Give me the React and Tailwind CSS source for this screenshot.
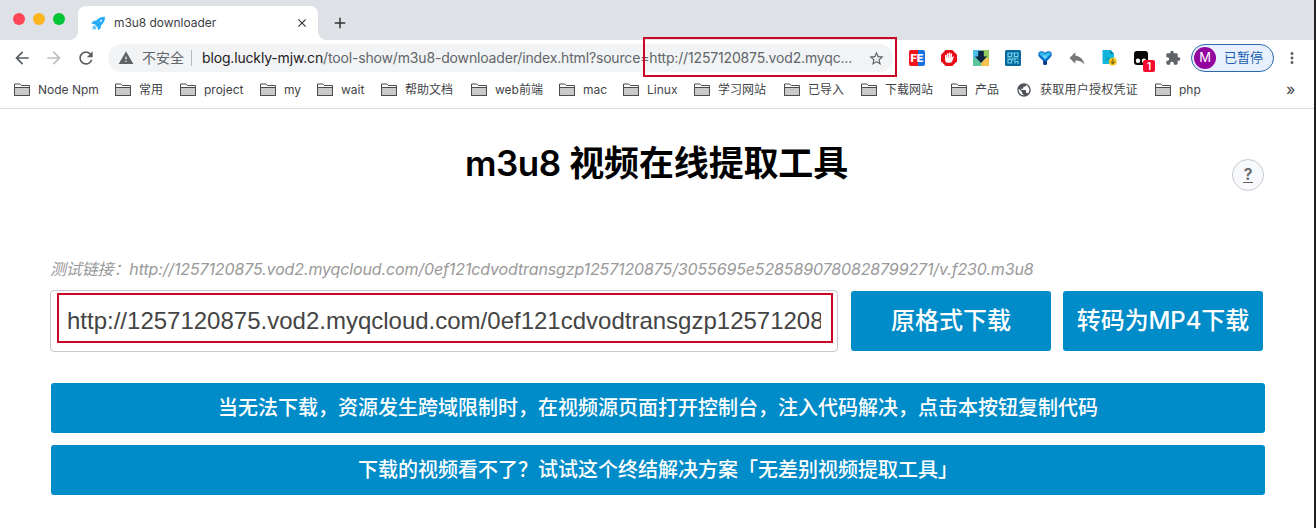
import React from "react";
import { MdArrowBack, MdArrowForward, MdRefresh, MdWarning, MdStarBorder, MdExtension, MdMoreVert, MdReply, MdClose, MdAdd, MdPublic } from "react-icons/md";

const bookmarks = [
  { label: "Node Npm", box: "w-[101px]", text: "" },
  { label: "常用", box: "w-[65px]", text: "" },
  { label: "project", box: "w-[80px]", text: "" },
  { label: "my", box: "w-[57px]", text: "" },
  { label: "wait", box: "w-[64px]", text: "" },
  { label: "帮助文档", box: "w-[90px]", text: "" },
  { label: "web前端", box: "w-[88px]", text: "" },
  { label: "mac", box: "w-[64px]", text: "" },
  { label: "Linux", box: "w-[71px]", text: "" },
  { label: "学习网站", box: "w-[90px]", text: "" },
  { label: "已导入", box: "w-[77px]", text: "" },
  { label: "下载网站", box: "w-[90px]", text: "" },
  { label: "产品", box: "w-[66px]", text: "" },
  { label: "获取用户授权凭证", box: "w-[138px]", text: "tracking-[0.25px] ml-[8px]", globe: true },
  { label: "php", box: "w-[60px]", text: "" },
];

function Folder() {
  return (
    <svg width="17" height="14" viewBox="0 0 17 14" className="shrink-0">
      <path d="M.5 12.500V1h5.300l1.700 1.500h8v10z" fill="#fff" stroke="#4a4a4a" />
      <path d="M.5 4.500h15v8H.5z" fill="#c9c9c9" stroke="#4a4a4a" />
    </svg>
  );
}

function Rocket() {
  return (
    <svg width="15" height="15" viewBox="0 0 15 15">
      <path d="M14 .8C10 .7 7.200 2 5.300 4.600L2.200 5 .4 7.700l2.900.2 3.400 3.500.3 2.800 2.700-1.900.3-3.100C12.700 7.400 14 4.800 14 .8z" fill="#27acf7" />
      <circle cx="10" cy="4.800" r="1.100" fill="#d5effd" />
      <path d="M3 9.300 1 11.200l1 .2-.7 2.300 2.400-.7.300.9 1.700-2.100z" fill="#5cc2fa" />
    </svg>
  );
}

function Extensions() {
  return (
    <div className="flex items-center gap-4">
      <div className="flex h-4 w-4 items-center justify-center overflow-hidden rounded-[2px] bg-[linear-gradient(90deg,#f4141c_58%,#1673e0_58%)] text-[11px] font-extrabold leading-none text-white">FE</div>
      <svg width="16" height="16" viewBox="0 0 16 16">
        <path d="M4.700 0h6.600L16 4.700v6.600L11.300 16H4.700L0 11.300V4.700z" fill="#e90b16" />
        <path d="M4.800 5.500v4M6.600 4v5M8.500 3.200v5M10.300 4v5" stroke="#fff" strokeWidth="1.500" strokeLinecap="round" />
        <path d="M4.100 7.500h6.900l1.100-1.100q.9-.4.700.5l-1.700 4.500Q10.500 12.800 8.500 12.800H7q-2.900-.1-2.900-3.100z" fill="#fff" />
      </svg>
      <svg width="16" height="16" viewBox="0 0 16 16">
        <path d="M0 0h8v8H0z" fill="#52bce8" /><path d="M8 0h8v8H8z" fill="#92ca62" />
        <path d="M0 8h8v8H0z" fill="#5cc39b" /><path d="M8 8h8v8H8z" fill="#f5c350" />
        <path d="M5.200 1h5.600v5.500H14L8 13 2 6.500h3.200z" fill="#092444" />
      </svg>
      <svg width="16" height="16" viewBox="0 0 16 16">
        <rect width="16" height="16" rx="1.500" fill="#07679c" />
        <g fill="none" stroke="#6fd0ec" strokeWidth="1.200"><path d="M3 3h3.500v3.500H3zM9.500 3H13v3.500H9.500zM3 9.500h3.500V13H3z" /><path d="M8 2.500v2M2.500 8h4M8 7v3h2V8h3M9 13h1v-1.500h3V14M12.500 9.500h1" /></g>
      </svg>
      <svg width="16" height="16" viewBox="0 0 16 16">
        <path d="M1.200 4.200Q1.500 1.300 4.200 1.300q1.800 0 3.800 1.400 2-1.400 3.800-1.400 2.700 0 3 2.900 0 1.500-1 2.700L10 11v3.200Q8 15.800 6.300 14.200V11L2.200 6.900Q1.200 5.700 1.200 4.200z" fill="#0869c4" />
        <path d="M2 3.900Q2.600 2 4.400 2.200q1.700.2 3.600 1.900 1.900-1.700 3.600-1.900 1.800-.2 2.400 1.700L8.200 9.800z" fill="#35b8ee" />
        <path d="M5.300 5 8 5.800 10.700 5 8.100 8.900z" fill="#72d9fa" />
        <path d="M6.300 11h3.700v3.200Q8 15.800 6.300 14.200z" fill="#063b82" />
      </svg>
      <MdReply className="-m-0.5 h-5 w-5 text-[#777]" />
      <svg width="16" height="16" viewBox="0 0 16 16">
        <path d="M1.500 0h7.800L13 3.700V14H2.500q-1 0-1-1z" fill="#12b5dc" />
        <path d="M9.300 0 13 3.700H9.300z" fill="#087d9f" /><path d="m5 6.500 4 4M5 10.500l3-3" stroke="#078dac" />
        <circle cx="11.800" cy="11.600" r="3.900" fill="#f2c51f" /><path d="M11.800 9v4.500m-2-1.800 2 2 2-2" fill="none" stroke="#806414" strokeWidth="1.100" />
      </svg>
      <div className="relative h-4 w-4">
        <svg width="16" height="16" viewBox="0 0 16 16">
          <rect x="1" y="1" width="14" height="14" rx="3" fill="#080808" /><circle cx="5" cy="10.800" r="2.200" fill="#fff" /><circle cx="11" cy="10.800" r="2.200" fill="#fff" />
        </svg>
        <span className="absolute left-[10px] top-[10px] flex h-3 w-3 items-center justify-center rounded-[2px] bg-[#f80b2e] text-[10px] font-semibold text-white">1</span>
      </div>
      <MdExtension className="h-4 w-4 text-[#5f6368]" />
    </div>
  );
}

function BrowserChrome() {
  return (
    <header className="h-[109px] shrink-0 border-b border-[#dcdcdc] bg-white">
      <div className="flex h-10 items-end bg-[#dee1e6]">
        <div className="flex h-full w-[70px] items-center gap-2 pb-[2px] pl-[13px]">
          <i className="h-3 w-3 rounded-full bg-[#ff4656]" />
          <i className="h-3 w-3 rounded-full bg-[#fdb51f]" />
          <i className="h-3 w-3 rounded-full bg-[#00c534]" />
        </div>
        <div className="h-2 w-2 bg-[radial-gradient(circle_at_0_0,#dee1e6_7.5px,#ffffff_8px)]" />
        <div className="flex h-[34px] w-60 items-center rounded-t-lg bg-white pl-[13px] pr-[9px]">
          <Rocket />
          <span className="ml-2 flex-1 whitespace-nowrap text-[12px] tracking-[-0.05px] text-[#3c4043]">m3u8 downloader</span>
          <MdClose className="h-[14px] w-[14px] text-[#333]" />
        </div>
        <div className="h-2 w-2 bg-[radial-gradient(circle_at_100%_0,#dee1e6_7.5px,#ffffff_8px)]" />
        <MdAdd className="mb-[8px] ml-[5px] h-[18px] w-[18px] text-[#333]" />
      </div>
      <div className="flex h-9 items-center">
        <nav className="flex w-[108px] items-center gap-3 pl-3 text-[#5a5e62]">
          <MdArrowBack className="h-5 w-5" />
          <MdArrowForward className="h-5 w-5 text-[#bcbec0]" />
          <MdRefresh className="h-5 w-5" />
        </nav>
        <div className="relative flex h-7 w-[785px] items-center rounded-full bg-[#f1f3f4] pl-[10px] text-[14px] text-[#62666a]">
          <MdWarning className="h-4 w-4 text-[#5f6368]" />
          <span className="ml-2 w-[49px] whitespace-nowrap pb-[2px]">不安全</span>
          <i className="h-4 w-px bg-[#b6b8bb]" />
          <span className="ml-[10px] w-[666px] whitespace-nowrap pb-[2px] tracking-[-0.16px]"><b className="font-normal text-[#1f2023]">blog.luckly-mjw.cn</b>/tool-show/m3u8-downloader/index.html?source=http://1257120875.vod2.myqc...</span>
          <MdStarBorder className="h-[17px] w-[17px] text-[#5f6368]" />
          <div className="absolute left-[535px] top-[-7px] h-10 w-[254px] border-2 border-[#cb0626]" />
        </div>
        <div className="ml-4"><Extensions /></div>
        <div className="ml-[10px] flex h-7 w-[83px] items-center rounded-full border border-[#2a69b2] bg-[#e8f0fe] pl-[2px] text-[#1b5fae]">
          <span className="flex h-[22px] w-[22px] items-center justify-center rounded-full bg-[#93059f] text-[13px] text-white">M</span>
          <span className="ml-[8px] whitespace-nowrap text-[13px]">已暂停</span>
        </div>
        <MdMoreVert className="ml-[9px] h-[18px] w-[18px] text-[#5f6368]" />
      </div>
      <div className="flex h-7 items-center pl-[14px] text-[12px] text-[#414347]">
        {bookmarks.map((b) => (
          <div key={b.label} className={`flex shrink-0 items-center ${b.box}`}>
            {b.globe ? <MdPublic className="-ml-px h-4 w-4 text-[#50545a]" /> : <Folder />}
            <span className={`ml-[7px] whitespace-nowrap ${b.text}`}>{b.label}</span>
          </div>
        ))}
        <span className="ml-[71px] pb-[2px] text-[16px]">»</span>
      </div>
    </header>
  );
}

export default function App() {
  return (
    <div className="flex h-[528px] w-[1316px] overflow-hidden bg-[#202020] font-[Inter,'Noto_Sans_CJK_SC',sans-serif]">
      <div className="flex w-[1314px] shrink-0 flex-col bg-white">
        <BrowserChrome />
        <main className="flex-1 pl-[50px]">
          <div className="flex h-[142px] items-start">
            <h1 className="ml-[250px] mt-[30px] w-[713px] whitespace-nowrap text-center text-[35px] font-semibold leading-[48px] tracking-[-0.15px] text-black"><span className="tracking-[-0.5px]">m3u8</span> 视频在线提取工具</h1>
            <div className="ml-[219px] mt-[50px] flex h-8 w-8 items-center justify-center rounded-full border border-[#c8cad0] bg-[#f7f9fc] text-[16px] font-semibold text-[#666]">
              <span className="border-b border-[#666] px-px leading-[15px]">?</span>
            </div>
          </div>
          <p className="h-[39px] whitespace-nowrap pt-[6px] text-[16px] italic leading-6 tracking-[-0.13px] text-[#999]">测试链接：http://1257120875.vod2.myqcloud.com/0ef121cdvodtransgzp1257120875/3055695e5285890780828799271/v.f230.m3u8</p>
          <div className="flex h-[62px] items-center">
            <div className="h-[62px] w-[788px] rounded border border-[#c9c9d1] pl-[6px] pt-[2px]">
              <div className="flex h-[50px] w-[776px] items-center border-2 border-[#cb0626] px-2 pt-[5px]">
                <div className="w-[754px] overflow-hidden whitespace-nowrap font-['Liberation_Sans',sans-serif] text-[24px] leading-8 text-[#444]">http://1257120875.vod2.myqcloud.com/0ef121cdvodtransgzp12571208</div>
              </div>
            </div>
            <button className="ml-[13px] h-[60px] w-[200px] rounded-[3px] bg-[#008cc8] text-[24px] font-medium text-white">原格式下载</button>
            <button className="ml-[12px] h-[60px] w-[200px] whitespace-nowrap rounded-[3px] bg-[#008cc8] text-[24px] font-medium tracking-[-0.1px] text-white">转码为MP4下载</button>
          </div>
          <div className="ml-px mt-[31px] flex w-[1214px] flex-col gap-3 text-[20px] font-medium text-white">
            <button className="h-[50px] rounded-[3px] bg-[#008cc8]">当无法下载，资源发生跨域限制时，在视频源页面打开控制台，注入代码解决，点击本按钮复制代码</button>
            <button className="h-[50px] rounded-[3px] bg-[#008cc8]">下载的视频看不了？试试这个终结解决方案「无差别视频提取工具」</button>
          </div>
        </main>
      </div>
    </div>
  );
}
